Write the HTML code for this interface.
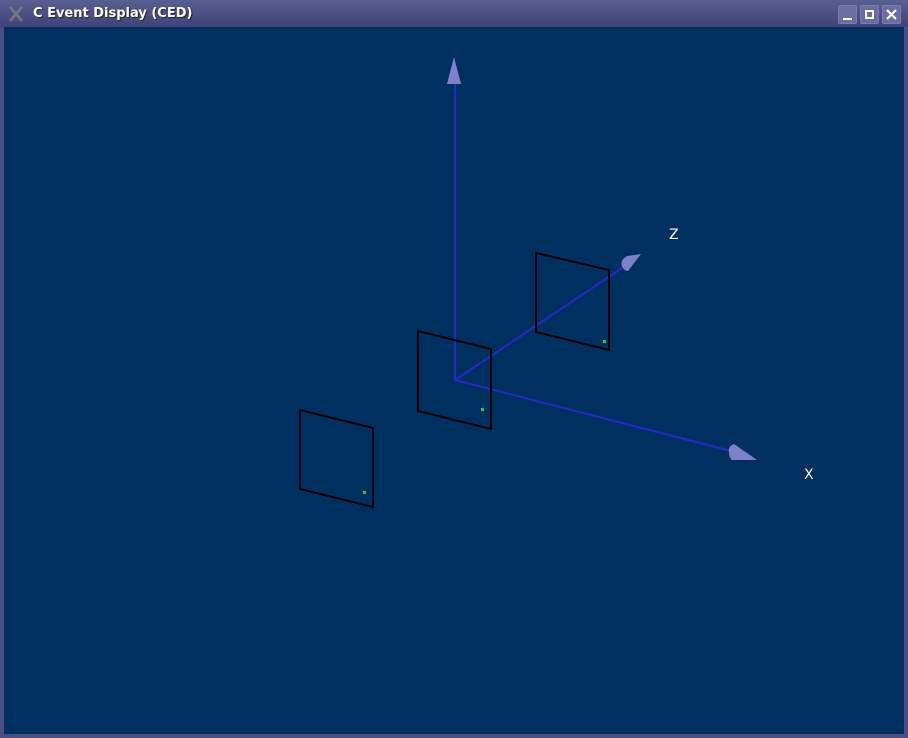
<!DOCTYPE html>
<html><head><style>
html,body{margin:0;padding:0;width:908px;height:738px;overflow:hidden;background:#4a4e80}
.tb{position:absolute;left:0;top:0;width:908px;height:27px;background:linear-gradient(#5a5e92,#3f437a);}
.t{position:absolute;left:33px;top:6px;font:bold 13px "DejaVu Sans","Liberation Sans",sans-serif;color:#fff;text-shadow:1px 1px 1px #222}
.b{position:absolute;top:5px;width:19px;height:19px;background:#6a6e9e;border:1px solid #7a7eae;border-radius:2px;box-sizing:border-box}
.c{position:absolute;left:4px;top:27px;width:900px;height:707px;background:#003060}
</style></head><body>
<div class="tb"></div>
<svg style="position:absolute;left:8px;top:6px" width="16" height="16"><path d="M2 1L14 15M14 1L2 15" stroke="#777" stroke-width="2.5"/></svg>
<div class="t">C Event Display (CED)</div>
<div class="b" style="left:838px"><div style="position:absolute;left:4px;top:12px;width:9px;height:2px;background:#fff"></div></div>
<div class="b" style="left:860px"><div style="position:absolute;left:4px;top:4px;width:9px;height:9px;border:2px solid #fff;box-sizing:border-box"></div></div>
<div class="b" style="left:882px"><svg width="17" height="17"><path d="M4 4L13 13M13 4L4 13" stroke="#fff" stroke-width="2.2"/></svg></div>
<div class="c"></div>
<svg style="position:absolute;left:0;top:0" width="908" height="738">
<g stroke="#2828c8" stroke-width="2" fill="none">
<path d="M455 380V84M455 380L735 452M455 380L625 266"/>
</g>
<g fill="#8080c8">
<path d="M454 57L461 84L447 84Z"/>
<path d="M757 460L734 444Q728 446 729 452Q729 458 732 460Z"/>
<path d="M641 254L627 256Q620 260 622 266Q624 271 628 271Z"/>
</g>
<g stroke="#000" stroke-width="2" fill="none">
<path d="M300 410L373 428L373 507L300 489Z"/>
<path d="M418 331L491 349L491 429L418 411Z"/>
<path d="M536 253L609 270L609 350L536 332Z"/>
</g>
<g fill="#20d040"><rect x="363" y="491" width="3" height="3"/><rect x="481" y="408" width="3" height="3"/><rect x="603" y="340" width="3" height="3"/></g>
<g fill="#fff" font-family="DejaVu Sans,Liberation Sans,sans-serif" font-size="14"><text x="669" y="239">Z</text><text x="804" y="479">X</text></g>
</svg>
</body></html>
